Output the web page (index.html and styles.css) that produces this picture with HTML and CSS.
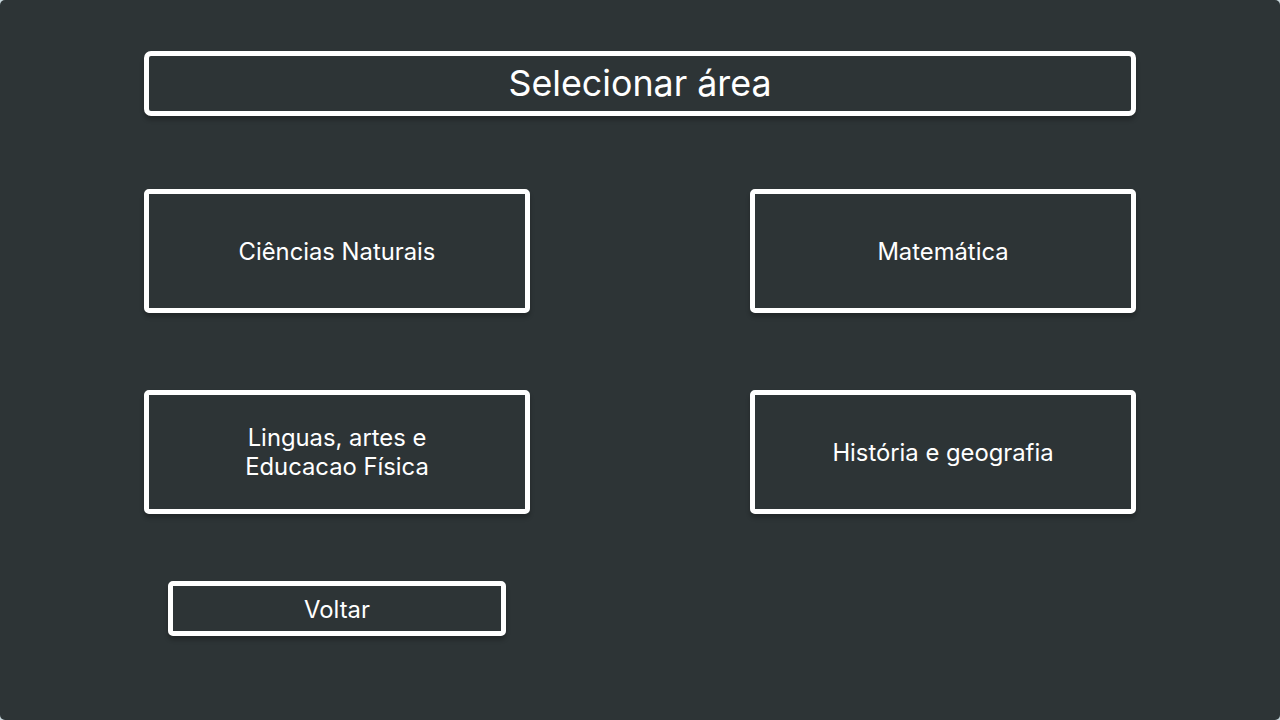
FILE: index.html
```html
<!DOCTYPE html>
<html lang="pt">
<head>
<meta charset="utf-8">
<title>Selecionar área</title>
<link rel="stylesheet" href="styles.css">
</head>
<body>
<main class="screen">
  <div class="content">
    <h1 class="title-box">Selecionar área</h1>
    <div class="grid">
      <button class="card">Ciências Naturais</button>
      <button class="card">Matemática</button>
      <button class="card">Linguas, artes e<br>Educacao Física</button>
      <button class="card">História e geografia</button>
    </div>
    <div class="footer">
      <button class="back">Voltar</button>
    </div>
  </div>
</main>
</body>
</html>
```
FILE: styles.css
```css
html {
  background: #c9d8dd;
}
body {
  margin: 0;
  width: 1280px;
  height: 720px;
  font-family: Inter, "Noto Sans", sans-serif;
  color: #ffffff;
}
.screen {
  width: 1280px;
  height: 720px;
  background: #2d3436;
  border-radius: 5px;
  overflow: hidden;
}
.content {
  width: 992px;
  margin-left: 144px;
  padding-top: 51px;
}
.title-box {
  margin: 0;
  height: 65px;
  box-sizing: border-box;
  border: 5px solid #ffffff;
  border-radius: 7px;
  box-shadow: 0 4px 4px rgba(0, 0, 0, 0.25);
  display: flex;
  align-items: center;
  justify-content: center;
  font-size: 35.8px;
  font-weight: 400;
  padding-bottom: 1px;
}
.grid {
  margin-top: 73px;
  display: grid;
  grid-template-columns: 386px 386px;
  justify-content: space-between;
  row-gap: 77px;
}
.card, .back {
  font-family: Inter, "Noto Sans", sans-serif;
  color: #ffffff;
  background: transparent;
  border: 5px solid #ffffff;
  border-radius: 5px;
  box-shadow: 0 4px 4px rgba(0, 0, 0, 0.25);
  box-sizing: border-box;
  padding: 0;
  cursor: pointer;
}
.card {
  height: 124px;
  font-size: 23.8px;
  line-height: 29px;
}
.footer {
  width: 386px;
  margin-top: 67px;
  display: flex;
  justify-content: center;
}
.back {
  width: 338px;
  height: 55px;
  font-size: 23.8px;
  padding-top: 2px;
}
```
